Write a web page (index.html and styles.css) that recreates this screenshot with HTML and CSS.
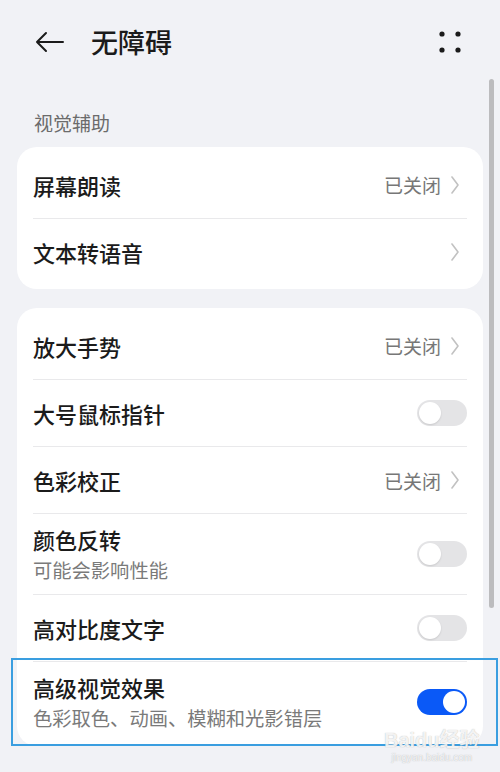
FILE: index.html
```html
<!DOCTYPE html>
<html lang="zh-CN">
<head>
<meta charset="UTF-8">
<meta name="viewport" content="width=device-width, initial-scale=1.0">
<title>无障碍</title>
<link rel="stylesheet" href="styles.css">
</head>
<body>

<header class="topbar">
  <div class="topbar-left">
    <svg class="back" width="30" height="30" viewBox="0 0 30 30">
      <path d="M3 15 H29 M3 15 L12 6 M3 15 L12 24" fill="none" stroke="#1b1b1b" stroke-width="2" stroke-linecap="round" stroke-linejoin="round"/>
    </svg>
    <h1>无障碍</h1>
  </div>
  <svg class="more" width="24" height="24" viewBox="0 0 24 24">
    <circle cx="4" cy="4" r="2.6" fill="#1b1b1b"/>
    <circle cx="20" cy="4" r="2.6" fill="#1b1b1b"/>
    <circle cx="4" cy="20" r="2.6" fill="#1b1b1b"/>
    <circle cx="20" cy="20" r="2.6" fill="#1b1b1b"/>
  </svg>
</header>

<div class="scrollbar"></div>

<p class="section-label">视觉辅助</p>

<div class="card">
  <div class="row">
    <span class="title">屏幕朗读</span>
    <span class="value">已关闭</span>
    <svg class="chevron" width="12" height="18" viewBox="0 0 12 18"><path d="M1 1 L7 9 L1 17" fill="none" stroke="#c2c2c2" stroke-width="1.6" stroke-linecap="round" stroke-linejoin="round"/></svg>
  </div>
  <div class="row">
    <span class="title">文本转语音</span>
    <svg class="chevron" width="12" height="18" viewBox="0 0 12 18"><path d="M1 1 L7 9 L1 17" fill="none" stroke="#c2c2c2" stroke-width="1.6" stroke-linecap="round" stroke-linejoin="round"/></svg>
  </div>
</div>

<div class="card">
  <div class="row">
    <span class="title">放大手势</span>
    <span class="value">已关闭</span>
    <svg class="chevron" width="12" height="18" viewBox="0 0 12 18"><path d="M1 1 L7 9 L1 17" fill="none" stroke="#c2c2c2" stroke-width="1.6" stroke-linecap="round" stroke-linejoin="round"/></svg>
  </div>
  <div class="row">
    <span class="title">大号鼠标指针</span>
    <span class="switch"></span>
  </div>
  <div class="row">
    <span class="title">色彩校正</span>
    <span class="value">已关闭</span>
    <svg class="chevron" width="12" height="18" viewBox="0 0 12 18"><path d="M1 1 L7 9 L1 17" fill="none" stroke="#c2c2c2" stroke-width="1.6" stroke-linecap="round" stroke-linejoin="round"/></svg>
  </div>
  <div class="row tall">
    <div class="text">
      <span class="title">颜色反转</span>
      <span class="sub">可能会影响性能</span>
    </div>
    <span class="switch"></span>
  </div>
  <div class="row">
    <span class="title">高对比度文字</span>
    <span class="switch"></span>
  </div>
  <div class="row tall marked">
    <div class="text">
      <span class="title">高级视觉效果</span>
      <span class="sub">色彩取色、动画、模糊和光影错层</span>
    </div>
    <span class="switch on"></span>
    <span class="highlight"></span>
  </div>
</div>

<div class="watermark">
  <span class="wm-logo">Baidu经验</span>
  <span class="wm-url">jingyan.baidu.com</span>
</div>

</body>
</html>
```

FILE: styles.css
```css
/* page */
body {
  margin: 0;
  padding: 0;
  background-color: #f1f2f6;
  font-family: "Noto Sans CJK SC", "Noto Sans", sans-serif;
  color: #1b1b1b;
  position: relative;
  height: 772px;
  overflow: hidden;
}

/* top bar */
.topbar {
  height: 84px;
  display: flex;
  justify-content: space-between;
  align-items: center;
  padding: 0 38px 0 34px;
}

.topbar-left {
  display: flex;
  align-items: center;
}

.back {
  display: block;
}

.topbar h1 {
  margin: 0 0 0 27px;
  font-size: 27px;
  font-weight: 500;
  line-height: 36px;
}

.more {
  display: block;
}

.scrollbar {
  position: absolute;
  left: 489px;
  top: 79px;
  width: 5px;
  height: 529px;
  border-radius: 3px;
  background-color: #bcbcbe;
}

/* section label */
.section-label {
  margin: 0;
  padding: 27px 34px 12px;
  font-size: 19px;
  line-height: 24px;
  color: #6b6b6b;
}

/* cards */
.card {
  margin: 0 17px 19px;
  padding: 4px 16px;
  background-color: #ffffff;
  border-radius: 20px;
}

.row {
  height: 67px;
  box-sizing: border-box;
  display: flex;
  align-items: center;
}

.row + .row {
  border-top: 1px solid #e9e9eb;
}

.row.tall {
  height: 81px;
}

.row .title {
  flex-grow: 1;
  font-size: 22px;
  font-weight: 500;
  line-height: 28px;
}

.text {
  flex-grow: 1;
  display: flex;
  flex-direction: column;
  gap: 4px;
}

.sub {
  font-size: 19.3px;
  line-height: 26px;
  color: #7a7a7a;
}

.value {
  font-size: 19px;
  color: #777777;
}

.chevron {
  display: block;
  margin-left: 10px;
  margin-right: 4px;
}

/* switches */
.switch {
  position: relative;
  width: 50px;
  height: 26px;
  border-radius: 13px;
  background-color: #e4e4e6;
  flex-shrink: 0;
}

.switch::after {
  content: "";
  position: absolute;
  top: 2px;
  left: 2px;
  width: 22px;
  height: 22px;
  border-radius: 50%;
  background-color: #ffffff;
  box-shadow: 0 1px 2px rgba(0, 0, 0, 0.12);
}

.switch.on {
  background-color: #0a59f7;
}

.switch.on::after {
  left: 26px;
  box-shadow: none;
}

/* annotation box */
.marked {
  position: relative;
}

.highlight {
  position: absolute;
  left: -22px;
  right: -31px;
  top: -4px;
  bottom: -4px;
  border: 2px solid #3a9ee0;
}

/* watermark */
.watermark {
  position: absolute;
  left: 384px;
  top: 728px;
  display: flex;
  flex-direction: column;
  align-items: center;
  color: rgba(255, 255, 255, 0.85);
  text-shadow: 0 0 1px rgba(120, 120, 120, 0.6);
  font-family: "Liberation Sans", "Noto Sans CJK SC", sans-serif;
}

.wm-logo {
  font-size: 20px;
  font-weight: bold;
  line-height: 24px;
}

.wm-url {
  font-size: 10px;
  line-height: 12px;
}
```
